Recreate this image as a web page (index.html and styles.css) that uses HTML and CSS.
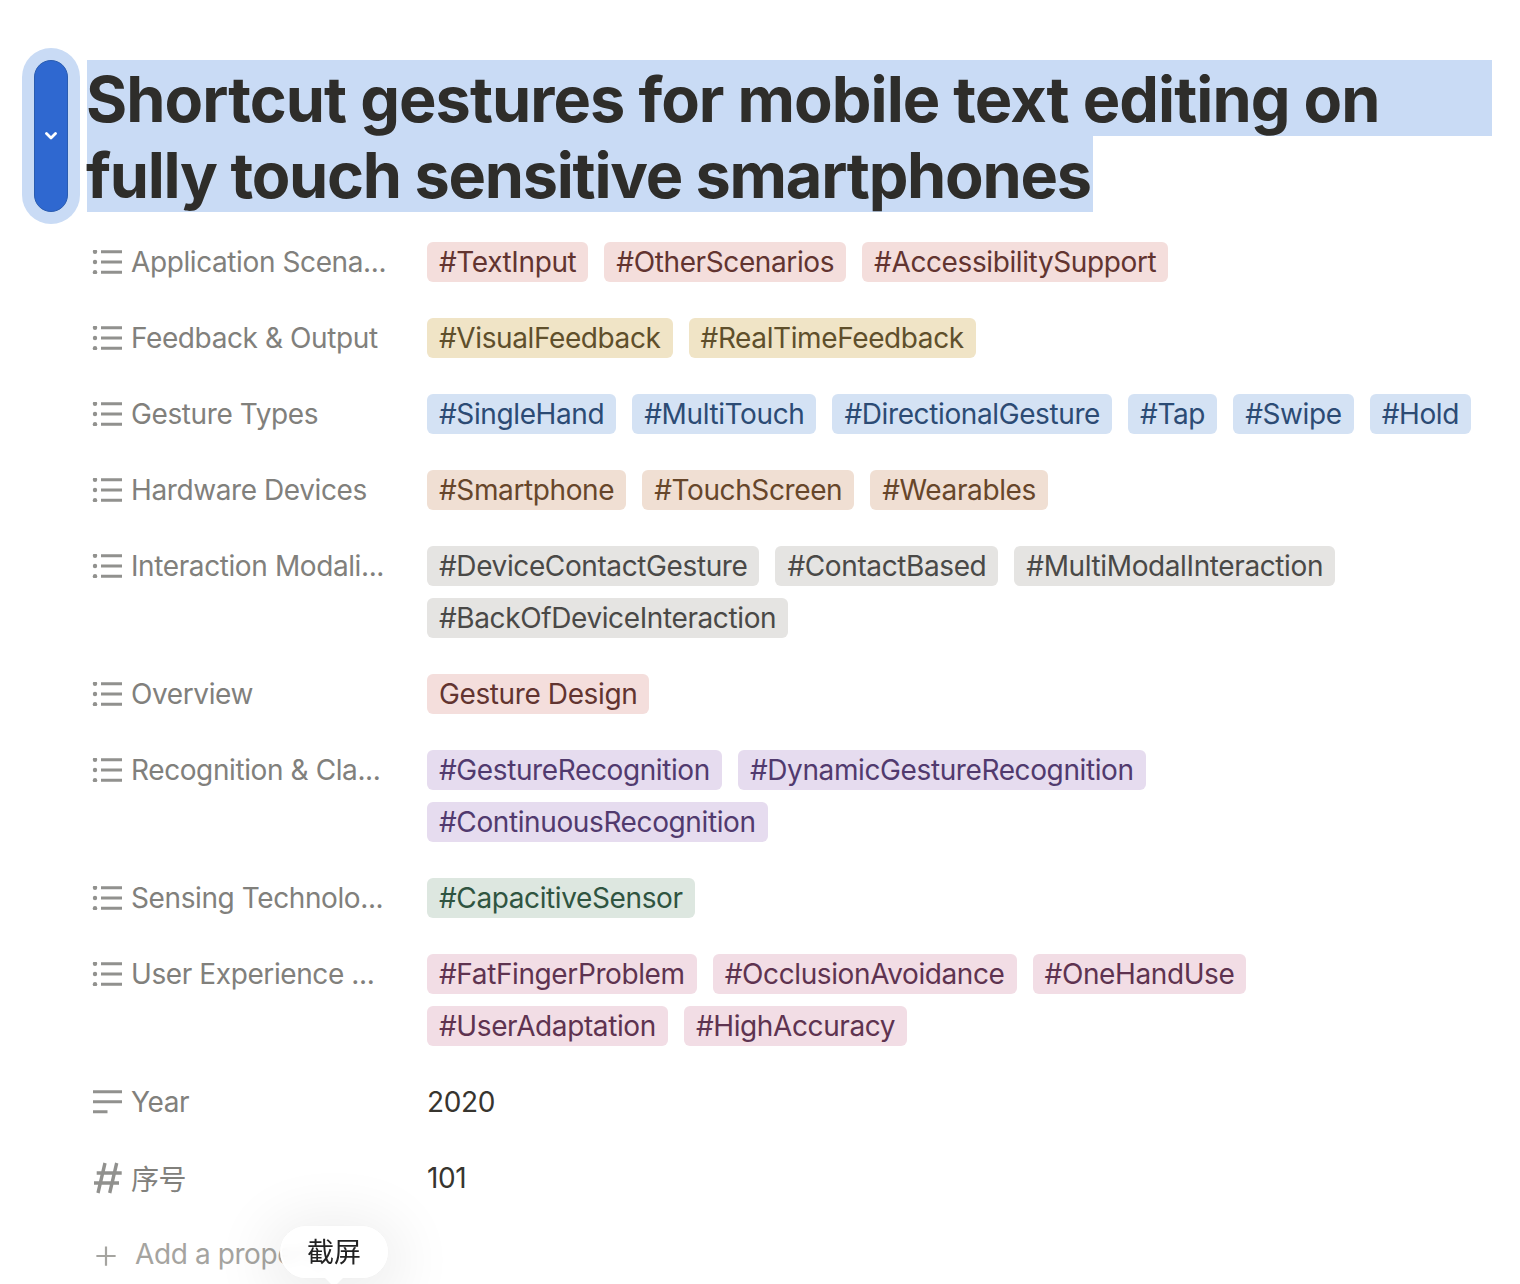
FILE: index.html
```html
<!DOCTYPE html>
<html lang="en">
<head>
    <meta charset="UTF-8">
    <title>Shortcut gestures</title>
    <link rel="stylesheet" href="styles.css">
</head>
<body>
    <div class="handle"><div class="handle-inner">
        <svg width="12" height="8" viewBox="0 0 12 8"><path d="M1.5 1.5 6 6l4.500-4.500" fill="none" stroke="#fff" stroke-width="2.8" stroke-linecap="round" stroke-linejoin="round"/></svg>
    </div></div>

    <h1 class="title">
        <span class="title-line">Shortcut gestures for mobile text editing on</span>
        <span class="title-line short">fully touch sensitive smartphones</span>
    </h1>

    <div class="props">
        <div class="prop">
            <div class="label"><svg class="icon" viewBox="0 0 30 24"><use href="#list"/></svg><span>Application Scena...</span></div>
            <div class="tags">
                <span class="tag red">#TextInput</span><span class="tag red">#OtherScenarios</span><span class="tag red">#AccessibilitySupport</span>
            </div>
        </div>
        <div class="prop">
            <div class="label"><svg class="icon" viewBox="0 0 30 24"><use href="#list"/></svg><span>Feedback &amp; Output</span></div>
            <div class="tags">
                <span class="tag yellow">#VisualFeedback</span><span class="tag yellow">#RealTimeFeedback</span>
            </div>
        </div>
        <div class="prop">
            <div class="label"><svg class="icon" viewBox="0 0 30 24"><use href="#list"/></svg><span>Gesture Types</span></div>
            <div class="tags">
                <span class="tag blue">#SingleHand</span><span class="tag blue">#MultiTouch</span><span class="tag blue">#DirectionalGesture</span><span class="tag blue">#Tap</span><span class="tag blue">#Swipe</span><span class="tag blue">#Hold</span>
            </div>
        </div>
        <div class="prop">
            <div class="label"><svg class="icon" viewBox="0 0 30 24"><use href="#list"/></svg><span>Hardware Devices</span></div>
            <div class="tags">
                <span class="tag brown">#Smartphone</span><span class="tag brown">#TouchScreen</span><span class="tag brown">#Wearables</span>
            </div>
        </div>
        <div class="prop">
            <div class="label"><svg class="icon" viewBox="0 0 30 24"><use href="#list"/></svg><span>Interaction Modali...</span></div>
            <div class="tags">
                <span class="tag gray">#DeviceContactGesture</span><span class="tag gray">#ContactBased</span><span class="tag gray">#MultiModalInteraction</span><span class="tag gray">#BackOfDeviceInteraction</span>
            </div>
        </div>
        <div class="prop">
            <div class="label"><svg class="icon" viewBox="0 0 30 24"><use href="#list"/></svg><span>Overview</span></div>
            <div class="tags">
                <span class="tag red">Gesture Design</span>
            </div>
        </div>
        <div class="prop">
            <div class="label"><svg class="icon" viewBox="0 0 30 24"><use href="#list"/></svg><span>Recognition &amp; Cla...</span></div>
            <div class="tags">
                <span class="tag purple">#GestureRecognition</span><span class="tag purple">#DynamicGestureRecognition</span><span class="tag purple">#ContinuousRecognition</span>
            </div>
        </div>
        <div class="prop">
            <div class="label"><svg class="icon" viewBox="0 0 30 24"><use href="#list"/></svg><span>Sensing Technolo...</span></div>
            <div class="tags">
                <span class="tag green">#CapacitiveSensor</span>
            </div>
        </div>
        <div class="prop">
            <div class="label"><svg class="icon" viewBox="0 0 30 24"><use href="#list"/></svg><span>User Experience ...</span></div>
            <div class="tags">
                <span class="tag pink">#FatFingerProblem</span><span class="tag pink">#OcclusionAvoidance</span><span class="tag pink">#OneHandUse</span><span class="tag pink">#UserAdaptation</span><span class="tag pink">#HighAccuracy</span>
            </div>
        </div>
        <div class="prop">
            <div class="label"><svg class="icon" viewBox="0 0 30 24"><path d="M1 1.700h29M1 11.700h29M1 21.700h14.500" fill="none" stroke="#91918e" stroke-width="3"/></svg><span>Year</span></div>
            <div class="value">2020</div>
        </div>
        <div class="prop">
            <div class="label"><svg class="icon hash" viewBox="0 0 30 30"><path d="M13 0 6 30M24.700 0l-7 30M4.700 10h25M2 20h25" fill="none" stroke="#91918e" stroke-width="3.400"/></svg><span>序号</span></div>
            <div class="value">101</div>
        </div>
    </div>

    <div class="add-prop">
        <svg class="plus" viewBox="0 0 24 24"><path d="M12 1.500v21M1.500 12h21" fill="none" stroke="#a5a4a0" stroke-width="2.400"/></svg>
        <span>Add a property</span>
    </div>

    <div class="bubble">截屏</div>

    <svg width="0" height="0" class="defs">
        <symbol id="list" viewBox="0 0 30 24">
            <circle cx="3" cy="1.700" r="2.200" fill="#91918e"/><circle cx="3" cy="12" r="2.200" fill="#91918e"/><circle cx="3" cy="22.300" r="2.200" fill="#91918e"/>
            <path d="M9 1.700h21M9 12h21M9 22.300h21" fill="none" stroke="#91918e" stroke-width="3"/>
        </symbol>
    </svg>
</body>
</html>
```

FILE: styles.css
```css
body {
    margin: 0;
    padding: 60px 28px 0 87px;
    box-sizing: border-box;
    height: 1284px;
    overflow: hidden;
    position: relative;
    background: #fff;
    font-family: Inter, "Noto Sans CJK SC", sans-serif;
    color: #32302c;
}

.defs {
    position: absolute;
}

.handle {
    position: absolute;
    left: 22px;
    top: 48px;
    width: 58px;
    height: 176px;
    padding: 12px;
    box-sizing: border-box;
    border-radius: 29px;
    background: #c9dbf5;
}

.handle-inner {
    height: 100%;
    box-sizing: border-box;
    border: 1px solid #2a5cb0;
    border-radius: 17px;
    background: #2f68d0;
    display: flex;
    align-items: center;
    justify-content: center;
}

.title {
    margin: 0 0 30px;
    font-size: 63px;
    font-weight: 700;
    line-height: 76px;
    letter-spacing: -0.95px;
    color: #2e2d2a;
}

.title-line {
    display: block;
    height: 76px;
    box-sizing: border-box;
    padding-top: 1px;
    text-indent: -1px;
    background: #c9dbf5;
    white-space: nowrap;
}

.title-line.short {
    width: fit-content;
    padding-right: 2px;
    letter-spacing: -1.25px;
}

.props {
    display: flex;
    flex-direction: column;
    gap: 36px;
}

.prop {
    display: flex;
}

.label {
    width: 340px;
    padding-left: 5px;
    height: 40px;
    box-sizing: border-box;
    flex-shrink: 0;
    display: flex;
    align-items: center;
    gap: 9px;
    font-size: 28px;
    letter-spacing: -0.4px;
    color: #81807c;
    white-space: nowrap;
}

.icon {
    width: 30px;
    height: 24px;
    flex-shrink: 0;
    overflow: visible;
}

.icon.hash {
    height: 30px;
}

.tags {
    display: flex;
    flex-wrap: wrap;
    gap: 12px 16px;
}

.tag {
    height: 40px;
    padding: 0 12px;
    border-radius: 6px;
    font-size: 28px;
    line-height: 41px;
    letter-spacing: -0.39px;
    white-space: nowrap;
}

.value {
    height: 40px;
    font-size: 28px;
    line-height: 41px;
    letter-spacing: -0.37px;
    color: #37352f;
}

.red { background: #f4dedc; color: #623430; }
.yellow { background: #f0e4c6; color: #5f4f2b; }
.blue { background: #d4e2f4; color: #2c4b74; }
.brown { background: #f0dfd3; color: #67462a; }
.gray { background: #e5e4e2; color: #4a4947; }
.purple { background: #e6dcef; color: #513a6e; }
.green { background: #dde7e0; color: #2f5440; }
.pink { background: #f2dde5; color: #5e3350; }

.add-prop {
    margin-top: 36px;
    height: 40px;
    padding-left: 8px;
    display: flex;
    align-items: center;
    gap: 16px;
    font-size: 28px;
    letter-spacing: -0.4px;
    color: #a5a4a0;
    white-space: nowrap;
}

.plus {
    width: 22px;
    height: 22px;
    margin-top: 4px;
    margin-right: 2px;
}

.bubble {
    position: absolute;
    left: 280px;
    top: 1226px;
    width: 108px;
    height: 52px;
    box-sizing: border-box;
    padding-bottom: 3px;
    border: 2px solid #fff;
    border-radius: 26px;
    background: rgba(255, 255, 255, 0.9);
    backdrop-filter: blur(5px);
    box-shadow: 0 8px 60px 16px rgba(0, 0, 0, 0.07), 0 0 1px rgba(0, 0, 0, 0.1);
    display: flex;
    align-items: center;
    justify-content: center;
    font-size: 27px;
    color: #222;
}

.bubble::after {
    content: "";
    position: absolute;
    left: 45px;
    bottom: -8px;
    width: 14px;
    height: 14px;
    background: #fff;
    transform: rotate(45deg);
}
```
